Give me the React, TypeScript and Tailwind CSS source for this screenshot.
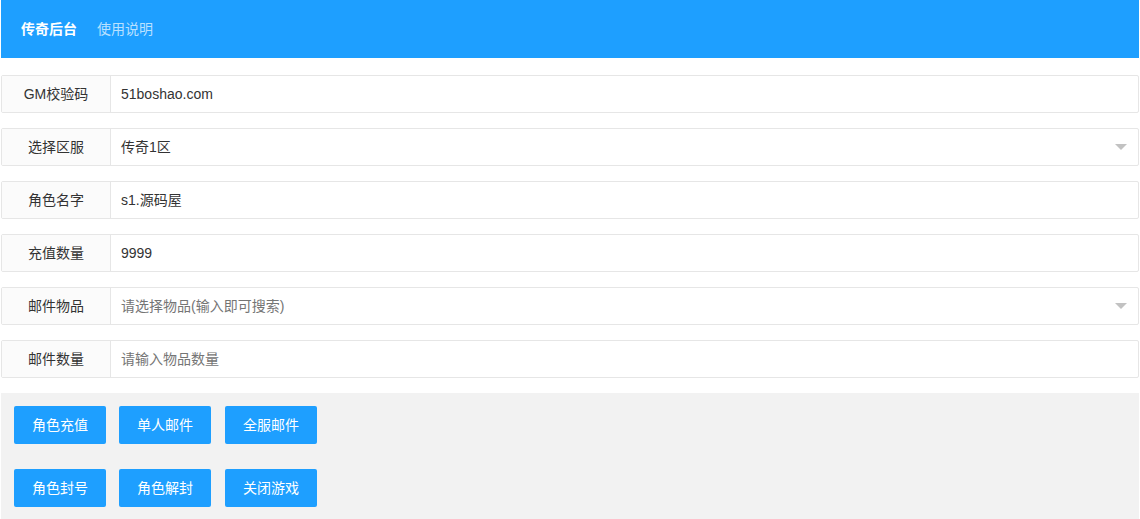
import React from 'react';

const font = { fontFamily: '"Liberation Sans", "Noto Sans CJK SC", sans-serif' };

type Field = { label: string; value?: string; placeholder?: string; select?: boolean };

const fields: Field[] = [
    { label: 'GM校验码', value: '51boshao.com' },
    { label: '选择区服', value: '传奇1区', select: true },
    { label: '角色名字', value: 's1.源码屋' },
    { label: '充值数量', value: '9999' },
    { label: '邮件物品', placeholder: '请选择物品(输入即可搜索)', select: true },
    { label: '邮件数量', placeholder: '请输入物品数量' },
];

const buttonRows = [
    ['角色充值', '单人邮件', '全服邮件'],
    ['角色封号', '角色解封', '关闭游戏'],
];

function FormRow({ field }: { field: Field }) {
    return (
        <div className="flex h-[38px] border border-[#e6e6e6] rounded-[2px] bg-white">
            <div className="w-[109px] shrink-0 flex items-center justify-center bg-[#fbfbfb] border-r border-[#e6e6e6] text-[14px] text-[#333]">
                {field.label}
            </div>
            <div className="flex-1 flex items-center pl-[10px] pr-[10px] text-[14px]">
                {field.value ? (
                    <span className="text-[#333]">{field.value}</span>
                ) : (
                    <span className="text-[#757575]">{field.placeholder}</span>
                )}
                {field.select && (
                    <span className="ml-auto mr-[1px] w-0 h-0 border-l-[6px] border-r-[6px] border-t-[6px] border-l-transparent border-r-transparent border-t-[#c2c2c2]" />
                )}
            </div>
        </div>
    );
}

export default function App() {
    return (
        <div className="w-[1140px] h-[519px] overflow-hidden bg-white px-[1px]" style={font}>
            <div className="h-[58px] bg-[#1e9fff] flex items-center pl-[20px] text-[14px]">
                <span className="text-white font-bold">传奇后台</span>
                <span className="ml-[20px] text-white/70">使用说明</span>
            </div>
            <div className="pt-[17px] flex flex-col gap-[15px]">
                {fields.map((f) => (
                    <FormRow key={f.label} field={f} />
                ))}
            </div>
            <div className="mt-[15px] bg-[#f2f2f2] pl-[13px] pt-[13px] pb-[20px] flex flex-col gap-[25px]">
                {buttonRows.map((row, i) => (
                    <div key={i} className="flex gap-[13px]">
                        {row.map((b, j) => (
                            <button key={b} type="button"
                                className={j === 2
                                    ? 'ml-[1px] w-[92px] h-[38px] bg-[#1e9fff] text-white text-[14px] rounded-[2px]'
                                    : 'w-[92px] h-[38px] bg-[#1e9fff] text-white text-[14px] rounded-[2px]'}>
                                {b}
                            </button>
                        ))}
                    </div>
                ))}
            </div>
        </div>
    );
}
